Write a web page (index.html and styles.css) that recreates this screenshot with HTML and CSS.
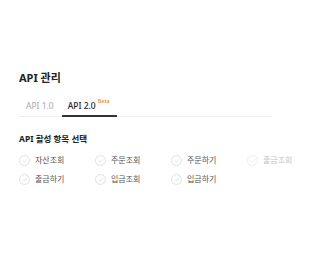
FILE: index.html
```html
<!DOCTYPE html>
<html lang="ko">
<head>
  <meta charset="UTF-8">
  <title>API 관리</title>
  <link rel="stylesheet" href="styles.css">
</head>
<body>
  <div class="page">
    <h1 class="title">API 관리</h1>
    <div class="tabs">
      <div class="tab">API 1.0</div>
      <div class="tab active">API 2.0<sup class="beta">Beta</sup></div>
    </div>
    <h2 class="subtitle">API 활성 항목 선택</h2>
    <div class="options">
      <label class="option"><span class="check"><svg viewBox="0 0 12 12"><circle cx="6" cy="6" r="5.4"/><path d="M3.6 6.2l1.7 1.6 3.2-3.3"/></svg></span>자산조회</label>
      <label class="option"><span class="check"><svg viewBox="0 0 12 12"><circle cx="6" cy="6" r="5.4"/><path d="M3.6 6.2l1.7 1.6 3.2-3.3"/></svg></span>주문조회</label>
      <label class="option"><span class="check"><svg viewBox="0 0 12 12"><circle cx="6" cy="6" r="5.4"/><path d="M3.6 6.2l1.7 1.6 3.2-3.3"/></svg></span>주문하기</label>
      <label class="option disabled"><span class="check"><svg viewBox="0 0 12 12"><circle cx="6" cy="6" r="5.4"/><path d="M3.6 6.2l1.7 1.6 3.2-3.3"/></svg></span>출금조회</label>
      <label class="option"><span class="check"><svg viewBox="0 0 12 12"><circle cx="6" cy="6" r="5.4"/><path d="M3.6 6.2l1.7 1.6 3.2-3.3"/></svg></span>출금하기</label>
      <label class="option"><span class="check"><svg viewBox="0 0 12 12"><circle cx="6" cy="6" r="5.4"/><path d="M3.6 6.2l1.7 1.6 3.2-3.3"/></svg></span>입금조회</label>
      <label class="option"><span class="check"><svg viewBox="0 0 12 12"><circle cx="6" cy="6" r="5.4"/><path d="M3.6 6.2l1.7 1.6 3.2-3.3"/></svg></span>입금하기</label>
    </div>
  </div>
</body>
</html>
```

FILE: styles.css
```css
body {
  margin: 0;
  background: #fff;
  color: #222;
  font-family: "Noto Sans", "Noto Sans CJK KR", sans-serif;
}

.page {
  padding: 70px 64px 0 19px;
}

.title {
  margin: 0;
  font-size: 11px;
  line-height: 16px;
  font-weight: 700;
  color: #222;
}

.tabs {
  display: flex;
  margin-top: 10px;
  border-bottom: 1px solid #eee;
}

.tab {
  padding: 4px 7px 3px;
  font-size: 8.5px;
  line-height: 12px;
  color: #aaa;
  margin-bottom: -1px;
  border-bottom: 2px solid transparent;
}

.tab.active {
  color: #222;
  font-weight: 500;
  border-bottom-color: #333;
  margin-left: 1px;
  padding-left: 6px;
  padding-right: 7px;
}

.beta {
  font-size: 5.5px;
  line-height: 0;
  color: #f5862e;
  margin-left: 2px;
  vertical-align: 6px;
}

.subtitle {
  margin: 16px 0 0;
  font-size: 8.5px;
  line-height: 12px;
  font-weight: 700;
  color: #222;
}

.options {
  display: grid;
  grid-template-columns: repeat(4, 76px);
  row-gap: 7px;
  margin-top: 9px;
}

.option {
  display: flex;
  align-items: center;
  gap: 5px;
  font-size: 8px;
  line-height: 12px;
  color: #555;
}

.check svg {
  display: block;
  width: 11px;
  height: 11px;
  fill: none;
  stroke: #d5d5d5;
  stroke-width: 0.8;
}

.option.disabled {
  color: #c4c4c4;
}

.option.disabled .check svg {
  stroke: #e8e8e8;
}
```
